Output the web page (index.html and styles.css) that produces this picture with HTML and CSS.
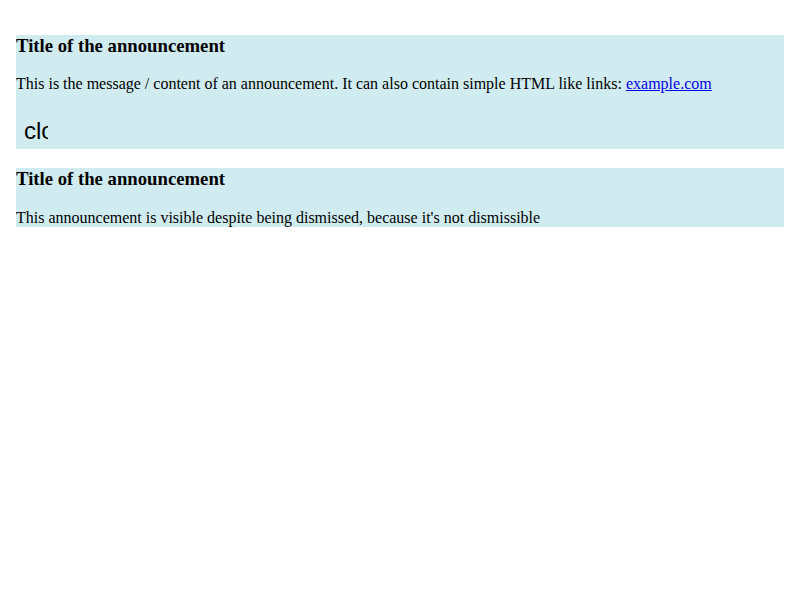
FILE: index.html
```html
<!DOCTYPE html>
<html>
<head>
<meta charset="utf-8">
<link rel="stylesheet" href="styles.css">
</head>
<body>
<div class="wrap">
  <div class="ann">
    <h3 class="ann-title">Title of the announcement</h3>
    <p class="ann-text">This is the message / content of an announcement. It can also contain simple HTML like links: <a href="#">example.com</a></p>
    <div class="close">close</div>
  </div>
  <div class="ann">
    <h3 class="ann-title">Title of the announcement</h3>
    <p class="ann-text">This announcement is visible despite being dismissed, because it's not dismissible</p>
  </div>
</div>
</body>
</html>
```
FILE: styles.css
```css
body {
  margin: 8px;
  font-family: "Liberation Serif", serif;
  font-size: 16px;
  color: #000;
  background: #fff;
}
.wrap {
  padding: 8px;
}
.ann {
  background: #d1ecf1;
}
.ann-title {
  font-size: 1.17em;
  font-weight: bold;
  margin: 1em 0;
}
.ann-text {
  margin: 1em 0;
}
.ann-text a {
  color: #0000ee;
}
.close {
  margin-left: 8px;
  padding: 8px 0 4px;
  width: 24px;
  overflow: hidden;
  white-space: nowrap;
  font-family: "Liberation Sans", sans-serif;
  font-size: 24px;
}
```
